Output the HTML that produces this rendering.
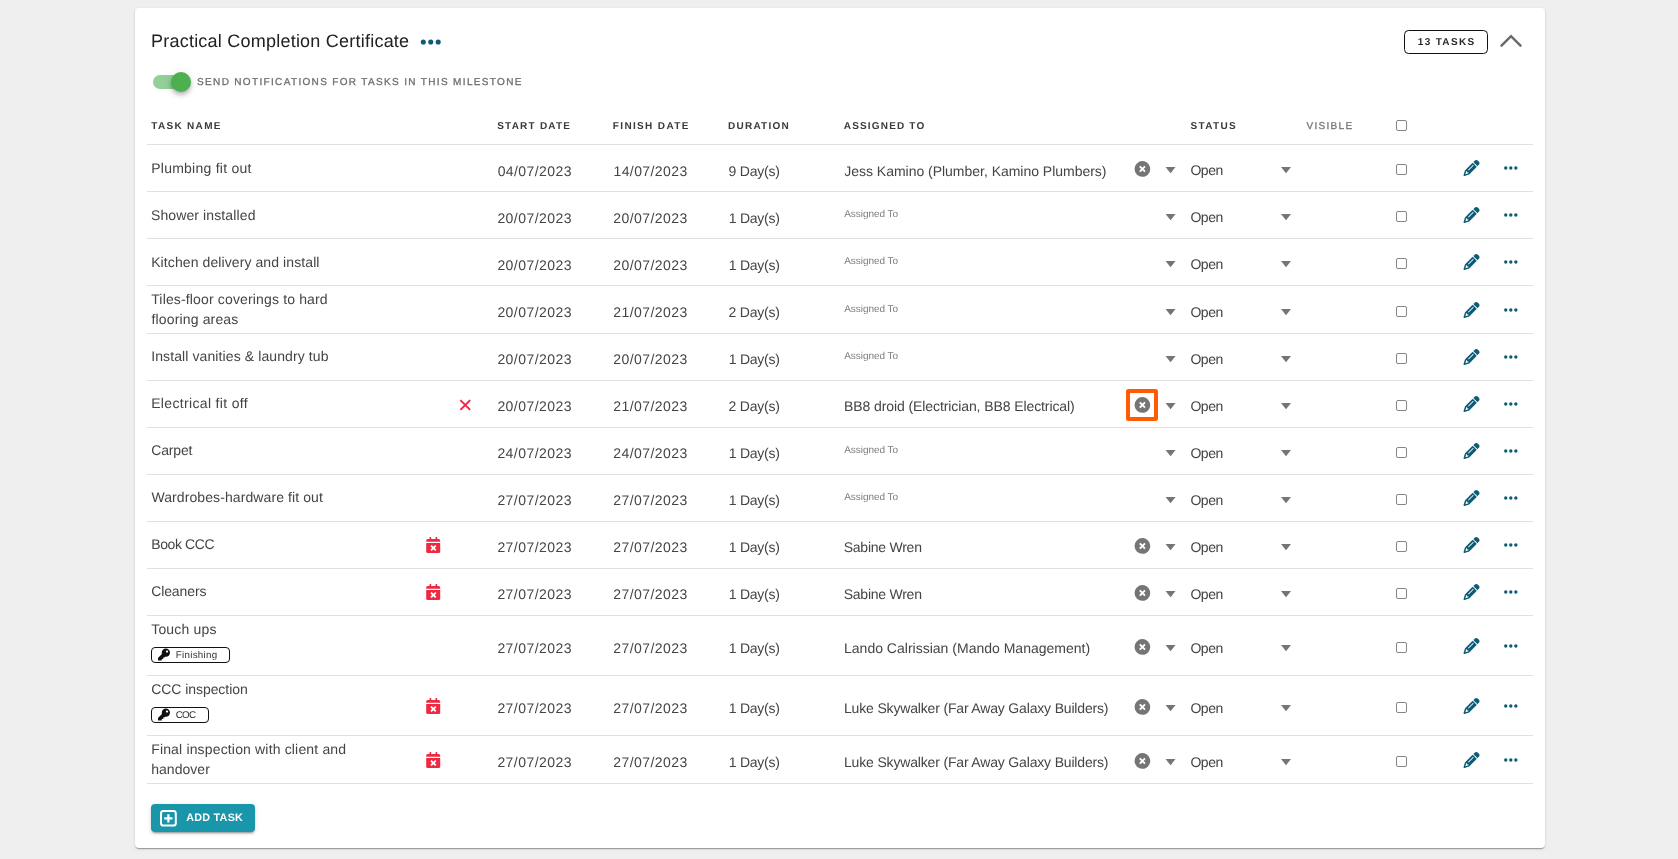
<!DOCTYPE html>
<html lang="en"><head><meta charset="utf-8"><title>Practical Completion Certificate</title>
<style>
*{box-sizing:border-box;margin:0;padding:0}
html,body{width:1678px;height:859px;overflow:hidden;background:#efefef;font-family:"Liberation Sans",sans-serif;}
.card{position:absolute;left:135px;top:8px;width:1410px;height:840px;background:#fff;border-radius:4px;box-shadow:0 2px 1px -1px rgba(0,0,0,.2),0 1px 1px 0 rgba(0,0,0,.14),0 1px 3px 0 rgba(0,0,0,.12);}
.t{position:absolute;white-space:nowrap;line-height:40px;text-rendering:geometricPrecision;}
.title{font-size:18px;font-weight:400;color:#212121;}
.notif{font-size:10px;font-weight:400;color:#6e6e6e;-webkit-text-stroke:0.3px #6e6e6e;}
.h{font-size:10px;font-weight:700;color:#3a3a3a;}
.hv{font-size:10px;font-weight:400;color:#777777;-webkit-text-stroke:0.3px #777777;}
.n{font-size:14px;font-weight:400;color:#444444;}
.c{font-size:14px;font-weight:400;color:#444444;}
.o{font-size:14px;font-weight:400;color:#444444;}
.ph{font-size:10px;font-weight:400;color:#7d7d7d;}
.tasks{font-size:10px;font-weight:700;color:#2a2a2a;}
.add{font-size:10.75px;font-weight:700;color:#ffffff;}
.tag{font-size:9.75px;font-weight:400;color:#333333;}

.hr{position:absolute;left:147px;width:1386px;height:1px;background:#e0e0e0;}
.abs{position:absolute;}
.layer{position:absolute;left:0;top:0;width:1678px;height:859px;will-change:transform;}
.cb{position:absolute;width:11px;height:11px;border:1px solid #858585;border-radius:2px;background:#fff;}
.tagbox{position:absolute;height:16px;border:1.3px solid #111;border-radius:4px;background:#fff;}
svg{position:absolute;overflow:visible}
</style></head>
<body>
<div class="card"></div>
<div class="layer">
<span class="t title" style="left:151.00px;top:21px;letter-spacing:0.226px;">Practical Completion Certificate</span>
<svg style="left:419px;top:38px" width="23" height="9"><g transform="translate(0.5 0.0)"><circle cx="3.8" cy="4" r="2.55" fill="#0d5c75"/><circle cx="11.25" cy="4" r="2.55" fill="#0d5c75"/><circle cx="18.7" cy="4" r="2.55" fill="#0d5c75"/></g></svg>
<div class="abs" style="left:1404px;top:30px;width:84px;height:24px;border:1.5px solid #111;border-radius:4.5px;background:#fff"></div>
<span class="t tasks" style="left:1417.80px;top:23px;letter-spacing:1.321px;">13 TASKS</span>
<svg style="left:1499px;top:33px" width="24" height="16"><path d="M2.5 12.7 L12 3.2 L21.5 12.7" fill="none" stroke="#6a6a6a" stroke-width="2.5" stroke-linecap="round"/></svg>
<div class="abs" style="left:153px;top:75px;width:35px;height:14px;border-radius:7px;background:#93d097"></div>
<div class="abs" style="left:171px;top:72px;width:20px;height:20px;border-radius:10px;background:#4caf50;box-shadow:0 2px 4px -1px rgba(0,0,0,.2),0 4px 5px 0 rgba(0,0,0,.14),0 1px 10px 0 rgba(0,0,0,.12)"></div>
<span class="t notif" style="left:197.05px;top:63px;letter-spacing:1.339px;">SEND NOTIFICATIONS FOR TASKS IN THIS MILESTONE</span>
<span class="t h" style="left:151.25px;top:107px;letter-spacing:1.312px;">TASK NAME</span>
<span class="t h" style="left:497.20px;top:107px;letter-spacing:1.222px;">START DATE</span>
<span class="t h" style="left:612.80px;top:107px;letter-spacing:1.35px;">FINISH DATE</span>
<span class="t h" style="left:728.10px;top:107px;letter-spacing:1.214px;">DURATION</span>
<span class="t h" style="left:843.75px;top:107px;letter-spacing:1.175px;">ASSIGNED TO</span>
<span class="t h" style="left:1190.40px;top:107px;letter-spacing:1.35px;">STATUS</span>
<span class="t hv" style="left:1306.50px;top:107px;letter-spacing:1.292px;">VISIBLE</span>
<div class="cb" style="left:1396px;top:120px"></div>
<div class="hr" style="top:144px"></div>
<div class="hr" style="top:191px"></div>
<div class="hr" style="top:238px"></div>
<div class="hr" style="top:285px"></div>
<div class="hr" style="top:333px"></div>
<div class="hr" style="top:380px"></div>
<div class="hr" style="top:427px"></div>
<div class="hr" style="top:474px"></div>
<div class="hr" style="top:521px"></div>
<div class="hr" style="top:568px"></div>
<div class="hr" style="top:615px"></div>
<div class="hr" style="top:675px"></div>
<div class="hr" style="top:735px"></div>
<div class="hr" style="top:783px"></div>
<span class="t n" style="left:151.20px;top:148px;letter-spacing:0.25px;">Plumbing fit out</span>
<span class="t c" style="left:497.65px;top:151px;letter-spacing:0.417px;">04/07/2023</span>
<span class="t c" style="left:613.45px;top:151px;letter-spacing:0.417px;">14/07/2023</span>
<span class="t c" style="left:728.50px;top:151px;letter-spacing:-0.214px;">9 Day(s)</span>
<span class="t c" style="left:844.25px;top:151px;letter-spacing:-0.02px;">Jess Kamino (Plumber, Kamino Plumbers)</span>
<svg style="left:1134px;top:160px" width="17" height="17"><g transform="translate(0.4 0.95)"><circle cx="8" cy="8" r="7.85" fill="#757575"/><path d="M5.4 5.45 L10.6 10.65 M10.6 5.45 L5.4 10.65" stroke="#fff" stroke-width="1.9" fill="none"/></g></svg>
<svg style="left:1165px;top:167px" width="11" height="8"><g transform="translate(0.55 0.0)"><path d="M0 0 H10 L5 6.2 Z" fill="#757575"/></g></svg>
<span class="t o" style="left:1190.40px;top:150px;letter-spacing:-0.417px;">Open</span>
<svg style="left:1281px;top:167px" width="11" height="8"><g transform="translate(0.0 0.0)"><path d="M0 0 H10 L5 6.2 Z" fill="#757575"/></g></svg>
<div class="cb" style="left:1396px;top:164px"></div>
<svg style="left:1463px;top:160px" width="17" height="17"><g transform="translate(0.55 0) scale(0.03125)"><path fill="#0d5c75" d="M410.3 231l11.3-11.3-33.9-33.9-62.1-62.1L291.7 89.800l-11.3 11.3-22.600 22.600L58.600 322.900c-10.4 10.400-18 23.300-22.200 37.400L1 480.700c-2.500 8.400-.2 17.500 6.100 23.700s15.300 8.500 23.700 6.100l120.300-35.400c14.100-4.200 27-11.800 37.400-22.200L387.700 253.700 410.300 231zM160 399.400l-9.100 22.700c-4 3.100-8.500 5.400-13.300 6.900L59.400 452l23-78.100c1.400-4.900 3.800-9.400 6.900-13.300l22.700-9.100v32c0 8.800 7.200 16 16 16h32zM362.700 18.700L348.300 33.200 325.700 55.800 314.300 67.100l33.900 33.900 62.100 62.100 33.900 33.900 11.300-11.300 22.600-22.600 14.500-14.500c25-25 25-65.500 0-90.500L453.300 18.700c-25-25-65.500-25-90.500 0zm-47.400 168l-144 144c-6.200 6.200-16.400 6.200-22.600 0s-6.200-16.400 0-22.600l144-144c6.200-6.200 16.400-6.200 22.600 0s6.200 16.400 0 22.600z"/></g></svg>
<svg style="left:1502px;top:165px" width="17" height="7"><g transform="translate(0.8 0)"><circle cx="2.95" cy="3" r="1.7" fill="#0d5c75"/><circle cx="8" cy="3" r="1.7" fill="#0d5c75"/><circle cx="13.05" cy="3" r="1.7" fill="#0d5c75"/></g></svg>
<span class="t n" style="left:150.95px;top:195px;letter-spacing:0.117px;">Shower installed</span>
<span class="t c" style="left:497.40px;top:198px;letter-spacing:0.444px;">20/07/2023</span>
<span class="t c" style="left:613.20px;top:198px;letter-spacing:0.444px;">20/07/2023</span>
<span class="t c" style="left:728.75px;top:198px;letter-spacing:-0.25px;">1 Day(s)</span>
<span class="t ph" style="left:844.25px;top:195px;letter-spacing:-0.06px;">Assigned To</span>
<svg style="left:1165px;top:214px" width="11" height="8"><g transform="translate(0.55 0.0)"><path d="M0 0 H10 L5 6.2 Z" fill="#757575"/></g></svg>
<span class="t o" style="left:1190.40px;top:197px;letter-spacing:-0.417px;">Open</span>
<svg style="left:1281px;top:214px" width="11" height="8"><g transform="translate(0.0 0.0)"><path d="M0 0 H10 L5 6.2 Z" fill="#757575"/></g></svg>
<div class="cb" style="left:1396px;top:211px"></div>
<svg style="left:1463px;top:207px" width="17" height="17"><g transform="translate(0.55 0) scale(0.03125)"><path fill="#0d5c75" d="M410.3 231l11.3-11.3-33.9-33.9-62.1-62.1L291.7 89.800l-11.3 11.3-22.600 22.600L58.600 322.900c-10.4 10.400-18 23.300-22.200 37.400L1 480.700c-2.500 8.400-.2 17.500 6.100 23.700s15.300 8.500 23.700 6.100l120.300-35.400c14.100-4.200 27-11.800 37.400-22.200L387.700 253.700 410.300 231zM160 399.400l-9.100 22.700c-4 3.100-8.500 5.400-13.300 6.900L59.400 452l23-78.100c1.400-4.900 3.800-9.400 6.900-13.300l22.700-9.100v32c0 8.800 7.200 16 16 16h32zM362.700 18.700L348.300 33.200 325.700 55.800 314.300 67.100l33.900 33.900 62.100 62.100 33.900 33.900 11.300-11.300 22.600-22.600 14.500-14.500c25-25 25-65.500 0-90.500L453.300 18.700c-25-25-65.500-25-90.500 0zm-47.400 168l-144 144c-6.200 6.200-16.400 6.200-22.600 0s-6.200-16.400 0-22.600l144-144c6.200-6.200 16.400-6.200 22.600 0s6.200 16.400 0 22.600z"/></g></svg>
<svg style="left:1502px;top:212px" width="17" height="7"><g transform="translate(0.8 0)"><circle cx="2.95" cy="3" r="1.7" fill="#0d5c75"/><circle cx="8" cy="3" r="1.7" fill="#0d5c75"/><circle cx="13.05" cy="3" r="1.7" fill="#0d5c75"/></g></svg>
<span class="t n" style="left:151.20px;top:242px;letter-spacing:0.093px;">Kitchen delivery and install</span>
<span class="t c" style="left:497.40px;top:245px;letter-spacing:0.444px;">20/07/2023</span>
<span class="t c" style="left:613.20px;top:245px;letter-spacing:0.444px;">20/07/2023</span>
<span class="t c" style="left:728.75px;top:245px;letter-spacing:-0.25px;">1 Day(s)</span>
<span class="t ph" style="left:844.25px;top:242px;letter-spacing:-0.06px;">Assigned To</span>
<svg style="left:1165px;top:261px" width="11" height="8"><g transform="translate(0.55 0.0)"><path d="M0 0 H10 L5 6.2 Z" fill="#757575"/></g></svg>
<span class="t o" style="left:1190.40px;top:244px;letter-spacing:-0.417px;">Open</span>
<svg style="left:1281px;top:261px" width="11" height="8"><g transform="translate(0.0 0.0)"><path d="M0 0 H10 L5 6.2 Z" fill="#757575"/></g></svg>
<div class="cb" style="left:1396px;top:258px"></div>
<svg style="left:1463px;top:254px" width="17" height="17"><g transform="translate(0.55 0) scale(0.03125)"><path fill="#0d5c75" d="M410.3 231l11.3-11.3-33.9-33.9-62.1-62.1L291.7 89.800l-11.3 11.3-22.600 22.600L58.600 322.900c-10.4 10.400-18 23.300-22.200 37.400L1 480.700c-2.500 8.400-.2 17.500 6.100 23.700s15.300 8.500 23.700 6.100l120.300-35.400c14.100-4.200 27-11.800 37.400-22.200L387.700 253.700 410.300 231zM160 399.400l-9.100 22.700c-4 3.100-8.500 5.400-13.300 6.900L59.400 452l23-78.100c1.400-4.900 3.800-9.400 6.900-13.300l22.700-9.100v32c0 8.800 7.200 16 16 16h32zM362.700 18.700L348.300 33.200 325.700 55.800 314.300 67.100l33.900 33.900 62.100 62.100 33.900 33.900 11.300-11.300 22.600-22.600 14.500-14.500c25-25 25-65.500 0-90.500L453.300 18.700c-25-25-65.500-25-90.500 0zm-47.400 168l-144 144c-6.200 6.200-16.400 6.200-22.600 0s-6.200-16.400 0-22.600l144-144c6.200-6.200 16.400-6.200 22.600 0s6.200 16.400 0 22.600z"/></g></svg>
<svg style="left:1502px;top:259px" width="17" height="7"><g transform="translate(0.8 0)"><circle cx="2.95" cy="3" r="1.7" fill="#0d5c75"/><circle cx="8" cy="3" r="1.7" fill="#0d5c75"/><circle cx="13.05" cy="3" r="1.7" fill="#0d5c75"/></g></svg>
<span class="t n" style="left:151.20px;top:279px;letter-spacing:0.152px;">Tiles-floor coverings to hard</span>
<span class="t n" style="left:151.45px;top:299px;letter-spacing:0.154px;">flooring areas</span>
<span class="t c" style="left:497.40px;top:292px;letter-spacing:0.444px;">20/07/2023</span>
<span class="t c" style="left:613.20px;top:292px;letter-spacing:0.444px;">21/07/2023</span>
<span class="t c" style="left:728.50px;top:292px;letter-spacing:-0.214px;">2 Day(s)</span>
<span class="t ph" style="left:844.25px;top:290px;letter-spacing:-0.06px;">Assigned To</span>
<svg style="left:1165px;top:309px" width="11" height="8"><g transform="translate(0.55 0.0)"><path d="M0 0 H10 L5 6.2 Z" fill="#757575"/></g></svg>
<span class="t o" style="left:1190.40px;top:292px;letter-spacing:-0.417px;">Open</span>
<svg style="left:1281px;top:309px" width="11" height="8"><g transform="translate(0.0 0.0)"><path d="M0 0 H10 L5 6.2 Z" fill="#757575"/></g></svg>
<div class="cb" style="left:1396px;top:306px"></div>
<svg style="left:1463px;top:302px" width="17" height="17"><g transform="translate(0.55 0) scale(0.03125)"><path fill="#0d5c75" d="M410.3 231l11.3-11.3-33.9-33.9-62.1-62.1L291.7 89.800l-11.3 11.3-22.600 22.600L58.600 322.900c-10.4 10.400-18 23.300-22.200 37.400L1 480.700c-2.500 8.400-.2 17.500 6.100 23.700s15.300 8.500 23.700 6.100l120.300-35.400c14.100-4.200 27-11.800 37.400-22.200L387.700 253.700 410.300 231zM160 399.400l-9.100 22.700c-4 3.100-8.500 5.400-13.300 6.900L59.400 452l23-78.100c1.400-4.900 3.800-9.400 6.900-13.300l22.700-9.100v32c0 8.800 7.200 16 16 16h32zM362.700 18.700L348.300 33.200 325.700 55.800 314.300 67.100l33.900 33.900 62.100 62.100 33.900 33.900 11.300-11.300 22.600-22.600 14.500-14.500c25-25 25-65.500 0-90.500L453.300 18.700c-25-25-65.500-25-90.500 0zm-47.400 168l-144 144c-6.200 6.200-16.400 6.200-22.600 0s-6.200-16.400 0-22.600l144-144c6.200-6.200 16.400-6.200 22.600 0s6.200 16.400 0 22.600z"/></g></svg>
<svg style="left:1502px;top:307px" width="17" height="7"><g transform="translate(0.8 0)"><circle cx="2.95" cy="3" r="1.7" fill="#0d5c75"/><circle cx="8" cy="3" r="1.7" fill="#0d5c75"/><circle cx="13.05" cy="3" r="1.7" fill="#0d5c75"/></g></svg>
<span class="t n" style="left:151.20px;top:336px;letter-spacing:0.103px;">Install vanities &amp; laundry tub</span>
<span class="t c" style="left:497.40px;top:339px;letter-spacing:0.444px;">20/07/2023</span>
<span class="t c" style="left:613.20px;top:339px;letter-spacing:0.444px;">20/07/2023</span>
<span class="t c" style="left:728.75px;top:339px;letter-spacing:-0.25px;">1 Day(s)</span>
<span class="t ph" style="left:844.25px;top:337px;letter-spacing:-0.06px;">Assigned To</span>
<svg style="left:1165px;top:356px" width="11" height="8"><g transform="translate(0.55 0.0)"><path d="M0 0 H10 L5 6.2 Z" fill="#757575"/></g></svg>
<span class="t o" style="left:1190.40px;top:339px;letter-spacing:-0.417px;">Open</span>
<svg style="left:1281px;top:356px" width="11" height="8"><g transform="translate(0.0 0.0)"><path d="M0 0 H10 L5 6.2 Z" fill="#757575"/></g></svg>
<div class="cb" style="left:1396px;top:353px"></div>
<svg style="left:1463px;top:349px" width="17" height="17"><g transform="translate(0.55 0) scale(0.03125)"><path fill="#0d5c75" d="M410.3 231l11.3-11.3-33.9-33.9-62.1-62.1L291.7 89.800l-11.3 11.3-22.600 22.600L58.600 322.900c-10.4 10.400-18 23.300-22.200 37.400L1 480.700c-2.500 8.400-.2 17.500 6.100 23.700s15.300 8.500 23.700 6.100l120.300-35.400c14.100-4.200 27-11.800 37.400-22.200L387.700 253.700 410.300 231zM160 399.400l-9.100 22.700c-4 3.100-8.500 5.400-13.300 6.900L59.400 452l23-78.100c1.400-4.900 3.800-9.400 6.900-13.300l22.700-9.100v32c0 8.800 7.200 16 16 16h32zM362.700 18.700L348.300 33.200 325.700 55.800 314.300 67.100l33.900 33.900 62.100 62.100 33.900 33.900 11.300-11.300 22.600-22.600 14.500-14.500c25-25 25-65.500 0-90.500L453.300 18.700c-25-25-65.500-25-90.500 0zm-47.400 168l-144 144c-6.200 6.200-16.400 6.200-22.600 0s-6.200-16.400 0-22.600l144-144c6.200-6.200 16.400-6.200 22.600 0s6.200 16.400 0 22.600z"/></g></svg>
<svg style="left:1502px;top:354px" width="17" height="7"><g transform="translate(0.8 0)"><circle cx="2.95" cy="3" r="1.7" fill="#0d5c75"/><circle cx="8" cy="3" r="1.7" fill="#0d5c75"/><circle cx="13.05" cy="3" r="1.7" fill="#0d5c75"/></g></svg>
<span class="t n" style="left:151.20px;top:383px;letter-spacing:0.338px;">Electrical fit off</span>
<span class="t c" style="left:497.40px;top:386px;letter-spacing:0.444px;">20/07/2023</span>
<span class="t c" style="left:613.20px;top:386px;letter-spacing:0.444px;">21/07/2023</span>
<span class="t c" style="left:728.50px;top:386px;letter-spacing:-0.214px;">2 Day(s)</span>
<span class="t c" style="left:844.00px;top:386px;letter-spacing:-0.092px;">BB8 droid (Electrician, BB8 Electrical)</span>
<svg style="left:1134px;top:396px" width="17" height="17"><g transform="translate(0.4 0.95)"><circle cx="8" cy="8" r="7.85" fill="#757575"/><path d="M5.4 5.45 L10.6 10.65 M10.6 5.45 L5.4 10.65" stroke="#fff" stroke-width="1.9" fill="none"/></g></svg>
<svg style="left:1165px;top:403px" width="11" height="8"><g transform="translate(0.55 0.0)"><path d="M0 0 H10 L5 6.2 Z" fill="#757575"/></g></svg>
<span class="t o" style="left:1190.40px;top:386px;letter-spacing:-0.417px;">Open</span>
<svg style="left:1281px;top:403px" width="11" height="8"><g transform="translate(0.0 0.0)"><path d="M0 0 H10 L5 6.2 Z" fill="#757575"/></g></svg>
<div class="cb" style="left:1396px;top:400px"></div>
<svg style="left:1463px;top:396px" width="17" height="17"><g transform="translate(0.55 0) scale(0.03125)"><path fill="#0d5c75" d="M410.3 231l11.3-11.3-33.9-33.9-62.1-62.1L291.7 89.800l-11.3 11.3-22.600 22.600L58.600 322.900c-10.4 10.400-18 23.300-22.200 37.400L1 480.700c-2.500 8.400-.2 17.500 6.100 23.700s15.300 8.500 23.700 6.100l120.300-35.400c14.100-4.200 27-11.800 37.400-22.200L387.700 253.700 410.300 231zM160 399.400l-9.100 22.700c-4 3.100-8.500 5.400-13.300 6.900L59.400 452l23-78.100c1.400-4.900 3.800-9.400 6.900-13.300l22.700-9.100v32c0 8.800 7.200 16 16 16h32zM362.700 18.700L348.300 33.200 325.700 55.800 314.300 67.100l33.900 33.900 62.100 62.100 33.900 33.900 11.300-11.300 22.600-22.600 14.500-14.500c25-25 25-65.500 0-90.500L453.300 18.700c-25-25-65.500-25-90.500 0zm-47.400 168l-144 144c-6.200 6.200-16.400 6.200-22.600 0s-6.200-16.400 0-22.600l144-144c6.200-6.200 16.400-6.200 22.600 0s6.200 16.400 0 22.600z"/></g></svg>
<svg style="left:1502px;top:401px" width="17" height="7"><g transform="translate(0.8 0)"><circle cx="2.95" cy="3" r="1.7" fill="#0d5c75"/><circle cx="8" cy="3" r="1.7" fill="#0d5c75"/><circle cx="13.05" cy="3" r="1.7" fill="#0d5c75"/></g></svg>
<svg style="left:459px;top:399px" width="13" height="13"><g transform="translate(0.3 0)"><path d="M1.1 1.1 L10.9 10.9 M10.9 1.1 L1.1 10.9" stroke="#ef2942" stroke-width="2" fill="none"/></g></svg>
<div class="abs" style="left:1126px;top:389px;width:32px;height:32px;border:4px solid #ff5b02;border-radius:2.5px"></div>
<span class="t n" style="left:151.20px;top:430px;letter-spacing:-0.15px;">Carpet</span>
<span class="t c" style="left:497.40px;top:433px;letter-spacing:0.444px;">24/07/2023</span>
<span class="t c" style="left:613.20px;top:433px;letter-spacing:0.444px;">24/07/2023</span>
<span class="t c" style="left:728.75px;top:433px;letter-spacing:-0.25px;">1 Day(s)</span>
<span class="t ph" style="left:844.25px;top:431px;letter-spacing:-0.06px;">Assigned To</span>
<svg style="left:1165px;top:450px" width="11" height="8"><g transform="translate(0.55 0.0)"><path d="M0 0 H10 L5 6.2 Z" fill="#757575"/></g></svg>
<span class="t o" style="left:1190.40px;top:433px;letter-spacing:-0.417px;">Open</span>
<svg style="left:1281px;top:450px" width="11" height="8"><g transform="translate(0.0 0.0)"><path d="M0 0 H10 L5 6.2 Z" fill="#757575"/></g></svg>
<div class="cb" style="left:1396px;top:447px"></div>
<svg style="left:1463px;top:443px" width="17" height="17"><g transform="translate(0.55 0) scale(0.03125)"><path fill="#0d5c75" d="M410.3 231l11.3-11.3-33.9-33.9-62.1-62.1L291.7 89.800l-11.3 11.3-22.600 22.600L58.600 322.900c-10.4 10.400-18 23.300-22.200 37.400L1 480.700c-2.500 8.400-.2 17.500 6.100 23.700s15.300 8.500 23.700 6.100l120.300-35.400c14.100-4.200 27-11.800 37.400-22.200L387.700 253.700 410.300 231zM160 399.400l-9.100 22.700c-4 3.100-8.500 5.400-13.300 6.900L59.400 452l23-78.100c1.400-4.900 3.800-9.400 6.900-13.300l22.700-9.100v32c0 8.800 7.200 16 16 16h32zM362.700 18.700L348.300 33.200 325.700 55.800 314.300 67.100l33.900 33.900 62.100 62.100 33.900 33.900 11.300-11.300 22.600-22.600 14.500-14.500c25-25 25-65.500 0-90.500L453.300 18.700c-25-25-65.500-25-90.500 0zm-47.400 168l-144 144c-6.200 6.200-16.400 6.200-22.600 0s-6.200-16.400 0-22.600l144-144c6.200-6.200 16.400-6.200 22.600 0s6.200 16.400 0 22.600z"/></g></svg>
<svg style="left:1502px;top:448px" width="17" height="7"><g transform="translate(0.8 0)"><circle cx="2.95" cy="3" r="1.7" fill="#0d5c75"/><circle cx="8" cy="3" r="1.7" fill="#0d5c75"/><circle cx="13.05" cy="3" r="1.7" fill="#0d5c75"/></g></svg>
<span class="t n" style="left:151.45px;top:477px;letter-spacing:0.09px;">Wardrobes-hardware fit out</span>
<span class="t c" style="left:497.40px;top:480px;letter-spacing:0.444px;">27/07/2023</span>
<span class="t c" style="left:613.20px;top:480px;letter-spacing:0.444px;">27/07/2023</span>
<span class="t c" style="left:728.75px;top:480px;letter-spacing:-0.25px;">1 Day(s)</span>
<span class="t ph" style="left:844.25px;top:478px;letter-spacing:-0.06px;">Assigned To</span>
<svg style="left:1165px;top:497px" width="11" height="8"><g transform="translate(0.55 0.0)"><path d="M0 0 H10 L5 6.2 Z" fill="#757575"/></g></svg>
<span class="t o" style="left:1190.40px;top:480px;letter-spacing:-0.417px;">Open</span>
<svg style="left:1281px;top:497px" width="11" height="8"><g transform="translate(0.0 0.0)"><path d="M0 0 H10 L5 6.2 Z" fill="#757575"/></g></svg>
<div class="cb" style="left:1396px;top:494px"></div>
<svg style="left:1463px;top:490px" width="17" height="17"><g transform="translate(0.55 0) scale(0.03125)"><path fill="#0d5c75" d="M410.3 231l11.3-11.3-33.9-33.9-62.1-62.1L291.7 89.800l-11.3 11.3-22.600 22.600L58.600 322.900c-10.4 10.400-18 23.300-22.200 37.400L1 480.700c-2.500 8.400-.2 17.500 6.100 23.700s15.300 8.500 23.700 6.100l120.300-35.400c14.100-4.200 27-11.800 37.400-22.200L387.700 253.700 410.300 231zM160 399.400l-9.100 22.700c-4 3.100-8.500 5.400-13.300 6.900L59.400 452l23-78.100c1.400-4.900 3.800-9.400 6.900-13.300l22.700-9.100v32c0 8.800 7.200 16 16 16h32zM362.700 18.700L348.300 33.200 325.700 55.800 314.300 67.100l33.900 33.900 62.100 62.100 33.900 33.900 11.300-11.300 22.600-22.600 14.500-14.500c25-25 25-65.500 0-90.500L453.300 18.700c-25-25-65.500-25-90.500 0zm-47.400 168l-144 144c-6.200 6.200-16.400 6.200-22.600 0s-6.200-16.400 0-22.600l144-144c6.200-6.200 16.400-6.200 22.600 0s6.200 16.400 0 22.600z"/></g></svg>
<svg style="left:1502px;top:495px" width="17" height="7"><g transform="translate(0.8 0)"><circle cx="2.95" cy="3" r="1.7" fill="#0d5c75"/><circle cx="8" cy="3" r="1.7" fill="#0d5c75"/><circle cx="13.05" cy="3" r="1.7" fill="#0d5c75"/></g></svg>
<span class="t n" style="left:151.20px;top:524px;letter-spacing:-0.393px;">Book CCC</span>
<span class="t c" style="left:497.40px;top:527px;letter-spacing:0.444px;">27/07/2023</span>
<span class="t c" style="left:613.20px;top:527px;letter-spacing:0.444px;">27/07/2023</span>
<span class="t c" style="left:728.75px;top:527px;letter-spacing:-0.25px;">1 Day(s)</span>
<span class="t c" style="left:843.75px;top:527px;letter-spacing:-0.25px;">Sabine Wren</span>
<svg style="left:1134px;top:537px" width="17" height="17"><g transform="translate(0.4 0.95)"><circle cx="8" cy="8" r="7.85" fill="#757575"/><path d="M5.4 5.45 L10.6 10.65 M10.6 5.45 L5.4 10.65" stroke="#fff" stroke-width="1.9" fill="none"/></g></svg>
<svg style="left:1165px;top:544px" width="11" height="8"><g transform="translate(0.55 0.0)"><path d="M0 0 H10 L5 6.2 Z" fill="#757575"/></g></svg>
<span class="t o" style="left:1190.40px;top:527px;letter-spacing:-0.417px;">Open</span>
<svg style="left:1281px;top:544px" width="11" height="8"><g transform="translate(0.0 0.0)"><path d="M0 0 H10 L5 6.2 Z" fill="#757575"/></g></svg>
<div class="cb" style="left:1396px;top:541px"></div>
<svg style="left:1463px;top:537px" width="17" height="17"><g transform="translate(0.55 0) scale(0.03125)"><path fill="#0d5c75" d="M410.3 231l11.3-11.3-33.9-33.9-62.1-62.1L291.7 89.800l-11.3 11.3-22.600 22.600L58.600 322.900c-10.4 10.400-18 23.300-22.200 37.400L1 480.700c-2.500 8.400-.2 17.500 6.100 23.700s15.300 8.500 23.700 6.100l120.300-35.400c14.100-4.200 27-11.800 37.400-22.200L387.700 253.700 410.300 231zM160 399.400l-9.100 22.700c-4 3.100-8.500 5.400-13.300 6.900L59.400 452l23-78.100c1.400-4.900 3.800-9.400 6.900-13.300l22.700-9.100v32c0 8.800 7.200 16 16 16h32zM362.700 18.700L348.300 33.200 325.700 55.800 314.300 67.100l33.900 33.900 62.100 62.100 33.900 33.900 11.300-11.300 22.600-22.600 14.500-14.500c25-25 25-65.500 0-90.500L453.300 18.700c-25-25-65.500-25-90.500 0zm-47.400 168l-144 144c-6.200 6.200-16.400 6.200-22.600 0s-6.200-16.400 0-22.600l144-144c6.200-6.200 16.400-6.200 22.600 0s6.200 16.400 0 22.600z"/></g></svg>
<svg style="left:1502px;top:542px" width="17" height="7"><g transform="translate(0.8 0)"><circle cx="2.95" cy="3" r="1.7" fill="#0d5c75"/><circle cx="8" cy="3" r="1.7" fill="#0d5c75"/><circle cx="13.05" cy="3" r="1.7" fill="#0d5c75"/></g></svg>
<svg style="left:426px;top:537px" width="15" height="17"><g transform="translate(0.2 0)"><g fill="#ef2942"><path d="M1.6 2 H12.4 A1.6 1.6 0 0 1 14 3.6 V4.8 H0 V3.6 A1.6 1.6 0 0 1 1.6 2 Z"/><path d="M0 6 H14 V14.4 A1.6 1.6 0 0 1 12.4 16 H1.6 A1.6 1.6 0 0 1 0 14.4 Z"/><rect x="3.3" y="0" width="1.7" height="3" rx="0.5"/><rect x="9.3" y="0" width="1.7" height="3" rx="0.5"/></g><path d="M4.8 8.6 L9.6 13.4 M9.6 8.6 L4.8 13.4" stroke="#fff" stroke-width="1.8" fill="none"/></g></svg>
<span class="t n" style="left:151.20px;top:571px;letter-spacing:-0.107px;">Cleaners</span>
<span class="t c" style="left:497.40px;top:574px;letter-spacing:0.444px;">27/07/2023</span>
<span class="t c" style="left:613.20px;top:574px;letter-spacing:0.444px;">27/07/2023</span>
<span class="t c" style="left:728.75px;top:574px;letter-spacing:-0.25px;">1 Day(s)</span>
<span class="t c" style="left:843.75px;top:574px;letter-spacing:-0.25px;">Sabine Wren</span>
<svg style="left:1134px;top:584px" width="17" height="17"><g transform="translate(0.4 0.95)"><circle cx="8" cy="8" r="7.85" fill="#757575"/><path d="M5.4 5.45 L10.6 10.65 M10.6 5.45 L5.4 10.65" stroke="#fff" stroke-width="1.9" fill="none"/></g></svg>
<svg style="left:1165px;top:591px" width="11" height="8"><g transform="translate(0.55 0.0)"><path d="M0 0 H10 L5 6.2 Z" fill="#757575"/></g></svg>
<span class="t o" style="left:1190.40px;top:574px;letter-spacing:-0.417px;">Open</span>
<svg style="left:1281px;top:591px" width="11" height="8"><g transform="translate(0.0 0.0)"><path d="M0 0 H10 L5 6.2 Z" fill="#757575"/></g></svg>
<div class="cb" style="left:1396px;top:588px"></div>
<svg style="left:1463px;top:584px" width="17" height="17"><g transform="translate(0.55 0) scale(0.03125)"><path fill="#0d5c75" d="M410.3 231l11.3-11.3-33.9-33.9-62.1-62.1L291.7 89.800l-11.3 11.3-22.600 22.600L58.600 322.900c-10.4 10.400-18 23.300-22.200 37.400L1 480.700c-2.500 8.400-.2 17.500 6.100 23.700s15.300 8.500 23.700 6.100l120.300-35.400c14.100-4.200 27-11.800 37.400-22.200L387.700 253.700 410.300 231zM160 399.400l-9.100 22.700c-4 3.100-8.500 5.400-13.300 6.900L59.400 452l23-78.100c1.400-4.900 3.800-9.400 6.900-13.300l22.700-9.100v32c0 8.800 7.200 16 16 16h32zM362.700 18.700L348.300 33.200 325.700 55.800 314.300 67.100l33.900 33.900 62.100 62.100 33.900 33.900 11.300-11.300 22.600-22.600 14.500-14.500c25-25 25-65.500 0-90.500L453.300 18.700c-25-25-65.500-25-90.500 0zm-47.400 168l-144 144c-6.200 6.200-16.400 6.200-22.600 0s-6.200-16.400 0-22.600l144-144c6.200-6.200 16.400-6.200 22.600 0s6.200 16.400 0 22.600z"/></g></svg>
<svg style="left:1502px;top:589px" width="17" height="7"><g transform="translate(0.8 0)"><circle cx="2.95" cy="3" r="1.7" fill="#0d5c75"/><circle cx="8" cy="3" r="1.7" fill="#0d5c75"/><circle cx="13.05" cy="3" r="1.7" fill="#0d5c75"/></g></svg>
<svg style="left:426px;top:584px" width="15" height="17"><g transform="translate(0.2 0)"><g fill="#ef2942"><path d="M1.6 2 H12.4 A1.6 1.6 0 0 1 14 3.6 V4.8 H0 V3.6 A1.6 1.6 0 0 1 1.6 2 Z"/><path d="M0 6 H14 V14.4 A1.6 1.6 0 0 1 12.4 16 H1.6 A1.6 1.6 0 0 1 0 14.4 Z"/><rect x="3.3" y="0" width="1.7" height="3" rx="0.5"/><rect x="9.3" y="0" width="1.7" height="3" rx="0.5"/></g><path d="M4.8 8.6 L9.6 13.4 M9.6 8.6 L4.8 13.4" stroke="#fff" stroke-width="1.8" fill="none"/></g></svg>
<span class="t n" style="left:151.20px;top:609px;letter-spacing:0.188px;">Touch ups</span>
<div class="tagbox" style="left:151px;top:647px;width:79px"></div>
<svg style="left:158px;top:648px" width="13" height="13"><g transform="translate(0.0 0.55) scale(0.0234375)"><path fill="#111" d="M512 176.001C512 273.203 433.202 352 336 352c-11.220 0-22.190-1.062-32.827-3.069l-24.012 27.014A23.999 23.999 0 0 1 261.223 384H224v40c0 13.255-10.745 24-24 24h-40v40c0 13.255-10.745 24-24 24H24c-13.255 0-24-10.745-24-24v-78.059c0-6.365 2.529-12.470 7.029-16.971l161.802-161.802C163.108 213.814 160 195.271 160 176 160 78.798 238.797.001 335.999 0 433.488-.001 512 78.511 512 176.001zM336 128c0 26.510 21.490 48 48 48s48-21.490 48-48-21.490-48-48-48-48 21.490-48 48z"/></g></svg>
<span class="t tag" style="left:175.80px;top:636px;letter-spacing:0.281px;">Finishing</span>
<span class="t c" style="left:497.40px;top:628px;letter-spacing:0.444px;">27/07/2023</span>
<span class="t c" style="left:613.20px;top:628px;letter-spacing:0.444px;">27/07/2023</span>
<span class="t c" style="left:728.75px;top:628px;letter-spacing:-0.25px;">1 Day(s)</span>
<span class="t c" style="left:844.00px;top:628px;letter-spacing:0.007px;">Lando Calrissian (Mando Management)</span>
<svg style="left:1134px;top:638px" width="17" height="17"><g transform="translate(0.4 0.95)"><circle cx="8" cy="8" r="7.85" fill="#757575"/><path d="M5.4 5.45 L10.6 10.65 M10.6 5.45 L5.4 10.65" stroke="#fff" stroke-width="1.9" fill="none"/></g></svg>
<svg style="left:1165px;top:645px" width="11" height="8"><g transform="translate(0.55 0.0)"><path d="M0 0 H10 L5 6.2 Z" fill="#757575"/></g></svg>
<span class="t o" style="left:1190.40px;top:628px;letter-spacing:-0.417px;">Open</span>
<svg style="left:1281px;top:645px" width="11" height="8"><g transform="translate(0.0 0.0)"><path d="M0 0 H10 L5 6.2 Z" fill="#757575"/></g></svg>
<div class="cb" style="left:1396px;top:642px"></div>
<svg style="left:1463px;top:638px" width="17" height="17"><g transform="translate(0.55 0) scale(0.03125)"><path fill="#0d5c75" d="M410.3 231l11.3-11.3-33.9-33.9-62.1-62.1L291.7 89.800l-11.3 11.3-22.600 22.600L58.600 322.900c-10.4 10.400-18 23.300-22.200 37.400L1 480.700c-2.500 8.400-.2 17.500 6.100 23.700s15.300 8.500 23.700 6.100l120.300-35.400c14.100-4.200 27-11.800 37.400-22.200L387.700 253.700 410.300 231zM160 399.400l-9.100 22.700c-4 3.100-8.500 5.400-13.300 6.900L59.400 452l23-78.100c1.400-4.900 3.800-9.400 6.900-13.300l22.700-9.100v32c0 8.800 7.200 16 16 16h32zM362.700 18.700L348.300 33.200 325.700 55.800 314.300 67.100l33.900 33.900 62.100 62.100 33.900 33.900 11.300-11.300 22.600-22.600 14.500-14.500c25-25 25-65.500 0-90.500L453.300 18.700c-25-25-65.500-25-90.500 0zm-47.400 168l-144 144c-6.200 6.200-16.400 6.200-22.600 0s-6.200-16.400 0-22.600l144-144c6.200-6.200 16.400-6.200 22.600 0s6.200 16.400 0 22.600z"/></g></svg>
<svg style="left:1502px;top:643px" width="17" height="7"><g transform="translate(0.8 0)"><circle cx="2.95" cy="3" r="1.7" fill="#0d5c75"/><circle cx="8" cy="3" r="1.7" fill="#0d5c75"/><circle cx="13.05" cy="3" r="1.7" fill="#0d5c75"/></g></svg>
<span class="t n" style="left:151.20px;top:669px;letter-spacing:-0.058px;">CCC inspection</span>
<div class="tagbox" style="left:151px;top:707px;width:58px"></div>
<svg style="left:158px;top:708px" width="13" height="13"><g transform="translate(0.0 0.55) scale(0.0234375)"><path fill="#111" d="M512 176.001C512 273.203 433.202 352 336 352c-11.220 0-22.190-1.062-32.827-3.069l-24.012 27.014A23.999 23.999 0 0 1 261.223 384H224v40c0 13.255-10.745 24-24 24h-40v40c0 13.255-10.745 24-24 24H24c-13.255 0-24-10.745-24-24v-78.059c0-6.365 2.529-12.470 7.029-16.971l161.802-161.802C163.108 213.814 160 195.271 160 176 160 78.798 238.797.001 335.999 0 433.488-.001 512 78.511 512 176.001zM336 128c0 26.510 21.490 48 48 48s48-21.490 48-48-21.490-48-48-48-48 21.490-48 48z"/></g></svg>
<span class="t tag" style="left:175.80px;top:696px;letter-spacing:-0.75px;">COC</span>
<span class="t c" style="left:497.40px;top:688px;letter-spacing:0.444px;">27/07/2023</span>
<span class="t c" style="left:613.20px;top:688px;letter-spacing:0.444px;">27/07/2023</span>
<span class="t c" style="left:728.75px;top:688px;letter-spacing:-0.25px;">1 Day(s)</span>
<span class="t c" style="left:844.00px;top:688px;letter-spacing:-0.169px;">Luke Skywalker (Far Away Galaxy Builders)</span>
<svg style="left:1134px;top:698px" width="17" height="17"><g transform="translate(0.4 0.95)"><circle cx="8" cy="8" r="7.85" fill="#757575"/><path d="M5.4 5.45 L10.6 10.65 M10.6 5.45 L5.4 10.65" stroke="#fff" stroke-width="1.9" fill="none"/></g></svg>
<svg style="left:1165px;top:705px" width="11" height="8"><g transform="translate(0.55 0.0)"><path d="M0 0 H10 L5 6.2 Z" fill="#757575"/></g></svg>
<span class="t o" style="left:1190.40px;top:688px;letter-spacing:-0.417px;">Open</span>
<svg style="left:1281px;top:705px" width="11" height="8"><g transform="translate(0.0 0.0)"><path d="M0 0 H10 L5 6.2 Z" fill="#757575"/></g></svg>
<div class="cb" style="left:1396px;top:702px"></div>
<svg style="left:1463px;top:698px" width="17" height="17"><g transform="translate(0.55 0) scale(0.03125)"><path fill="#0d5c75" d="M410.3 231l11.3-11.3-33.9-33.9-62.1-62.1L291.7 89.800l-11.3 11.3-22.600 22.600L58.600 322.900c-10.4 10.400-18 23.300-22.200 37.400L1 480.700c-2.500 8.400-.2 17.500 6.100 23.700s15.300 8.500 23.700 6.100l120.300-35.400c14.100-4.200 27-11.800 37.400-22.200L387.700 253.700 410.300 231zM160 399.400l-9.100 22.700c-4 3.100-8.500 5.400-13.300 6.900L59.400 452l23-78.100c1.400-4.900 3.800-9.400 6.900-13.300l22.700-9.100v32c0 8.800 7.200 16 16 16h32zM362.700 18.700L348.300 33.200 325.700 55.800 314.300 67.100l33.900 33.900 62.100 62.100 33.900 33.900 11.300-11.300 22.600-22.600 14.500-14.500c25-25 25-65.500 0-90.500L453.300 18.700c-25-25-65.500-25-90.500 0zm-47.400 168l-144 144c-6.200 6.200-16.400 6.200-22.600 0s-6.200-16.400 0-22.600l144-144c6.200-6.200 16.400-6.200 22.600 0s6.200 16.400 0 22.600z"/></g></svg>
<svg style="left:1502px;top:703px" width="17" height="7"><g transform="translate(0.8 0)"><circle cx="2.95" cy="3" r="1.7" fill="#0d5c75"/><circle cx="8" cy="3" r="1.7" fill="#0d5c75"/><circle cx="13.05" cy="3" r="1.7" fill="#0d5c75"/></g></svg>
<svg style="left:426px;top:698px" width="15" height="17"><g transform="translate(0.2 0)"><g fill="#ef2942"><path d="M1.6 2 H12.4 A1.6 1.6 0 0 1 14 3.6 V4.8 H0 V3.6 A1.6 1.6 0 0 1 1.6 2 Z"/><path d="M0 6 H14 V14.4 A1.6 1.6 0 0 1 12.4 16 H1.6 A1.6 1.6 0 0 1 0 14.4 Z"/><rect x="3.3" y="0" width="1.7" height="3" rx="0.5"/><rect x="9.3" y="0" width="1.7" height="3" rx="0.5"/></g><path d="M4.8 8.6 L9.6 13.4 M9.6 8.6 L4.8 13.4" stroke="#fff" stroke-width="1.8" fill="none"/></g></svg>
<span class="t n" style="left:151.20px;top:729px;letter-spacing:0.161px;">Final inspection with client and</span>
<span class="t n" style="left:151.20px;top:749px;letter-spacing:0.036px;">handover</span>
<span class="t c" style="left:497.40px;top:742px;letter-spacing:0.444px;">27/07/2023</span>
<span class="t c" style="left:613.20px;top:742px;letter-spacing:0.444px;">27/07/2023</span>
<span class="t c" style="left:728.75px;top:742px;letter-spacing:-0.25px;">1 Day(s)</span>
<span class="t c" style="left:844.00px;top:742px;letter-spacing:-0.169px;">Luke Skywalker (Far Away Galaxy Builders)</span>
<svg style="left:1134px;top:752px" width="17" height="17"><g transform="translate(0.4 0.95)"><circle cx="8" cy="8" r="7.85" fill="#757575"/><path d="M5.4 5.45 L10.6 10.65 M10.6 5.45 L5.4 10.65" stroke="#fff" stroke-width="1.9" fill="none"/></g></svg>
<svg style="left:1165px;top:759px" width="11" height="8"><g transform="translate(0.55 0.0)"><path d="M0 0 H10 L5 6.2 Z" fill="#757575"/></g></svg>
<span class="t o" style="left:1190.40px;top:742px;letter-spacing:-0.417px;">Open</span>
<svg style="left:1281px;top:759px" width="11" height="8"><g transform="translate(0.0 0.0)"><path d="M0 0 H10 L5 6.2 Z" fill="#757575"/></g></svg>
<div class="cb" style="left:1396px;top:756px"></div>
<svg style="left:1463px;top:752px" width="17" height="17"><g transform="translate(0.55 0) scale(0.03125)"><path fill="#0d5c75" d="M410.3 231l11.3-11.3-33.9-33.9-62.1-62.1L291.7 89.800l-11.3 11.3-22.600 22.600L58.600 322.900c-10.4 10.400-18 23.300-22.200 37.400L1 480.700c-2.500 8.400-.2 17.500 6.100 23.700s15.300 8.500 23.700 6.100l120.300-35.400c14.100-4.200 27-11.800 37.400-22.200L387.700 253.700 410.300 231zM160 399.400l-9.100 22.700c-4 3.100-8.500 5.400-13.300 6.900L59.400 452l23-78.100c1.400-4.900 3.800-9.400 6.900-13.300l22.700-9.100v32c0 8.800 7.200 16 16 16h32zM362.700 18.700L348.300 33.200 325.700 55.800 314.300 67.100l33.900 33.900 62.100 62.100 33.900 33.900 11.300-11.300 22.600-22.600 14.500-14.500c25-25 25-65.500 0-90.500L453.300 18.700c-25-25-65.500-25-90.500 0zm-47.400 168l-144 144c-6.200 6.200-16.400 6.200-22.600 0s-6.200-16.400 0-22.600l144-144c6.200-6.200 16.400-6.200 22.600 0s6.200 16.400 0 22.600z"/></g></svg>
<svg style="left:1502px;top:757px" width="17" height="7"><g transform="translate(0.8 0)"><circle cx="2.95" cy="3" r="1.7" fill="#0d5c75"/><circle cx="8" cy="3" r="1.7" fill="#0d5c75"/><circle cx="13.05" cy="3" r="1.7" fill="#0d5c75"/></g></svg>
<svg style="left:426px;top:752px" width="15" height="17"><g transform="translate(0.2 0)"><g fill="#ef2942"><path d="M1.6 2 H12.4 A1.6 1.6 0 0 1 14 3.6 V4.8 H0 V3.6 A1.6 1.6 0 0 1 1.6 2 Z"/><path d="M0 6 H14 V14.4 A1.6 1.6 0 0 1 12.4 16 H1.6 A1.6 1.6 0 0 1 0 14.4 Z"/><rect x="3.3" y="0" width="1.7" height="3" rx="0.5"/><rect x="9.3" y="0" width="1.7" height="3" rx="0.5"/></g><path d="M4.8 8.6 L9.6 13.4 M9.6 8.6 L4.8 13.4" stroke="#fff" stroke-width="1.8" fill="none"/></g></svg>
<div class="abs" style="left:151px;top:804px;width:104px;height:28px;border-radius:4px;background:#1a96ab;box-shadow:0 3px 1px -2px rgba(0,0,0,.2),0 2px 2px 0 rgba(0,0,0,.14),0 1px 5px 0 rgba(0,0,0,.12)"></div>
<svg style="left:160px;top:810px" width="17" height="17"><rect x="1" y="1" width="14.8" height="14.6" rx="2.4" fill="none" stroke="#fff" stroke-width="2"/><path d="M8.4 4.2 V12.4 M4.3 8.3 H12.5" stroke="#fff" stroke-width="2.2"/></svg>
<span class="t add" style="left:186.15px;top:798px;letter-spacing:0.286px;">ADD TASK</span>
</div>
</body></html>
